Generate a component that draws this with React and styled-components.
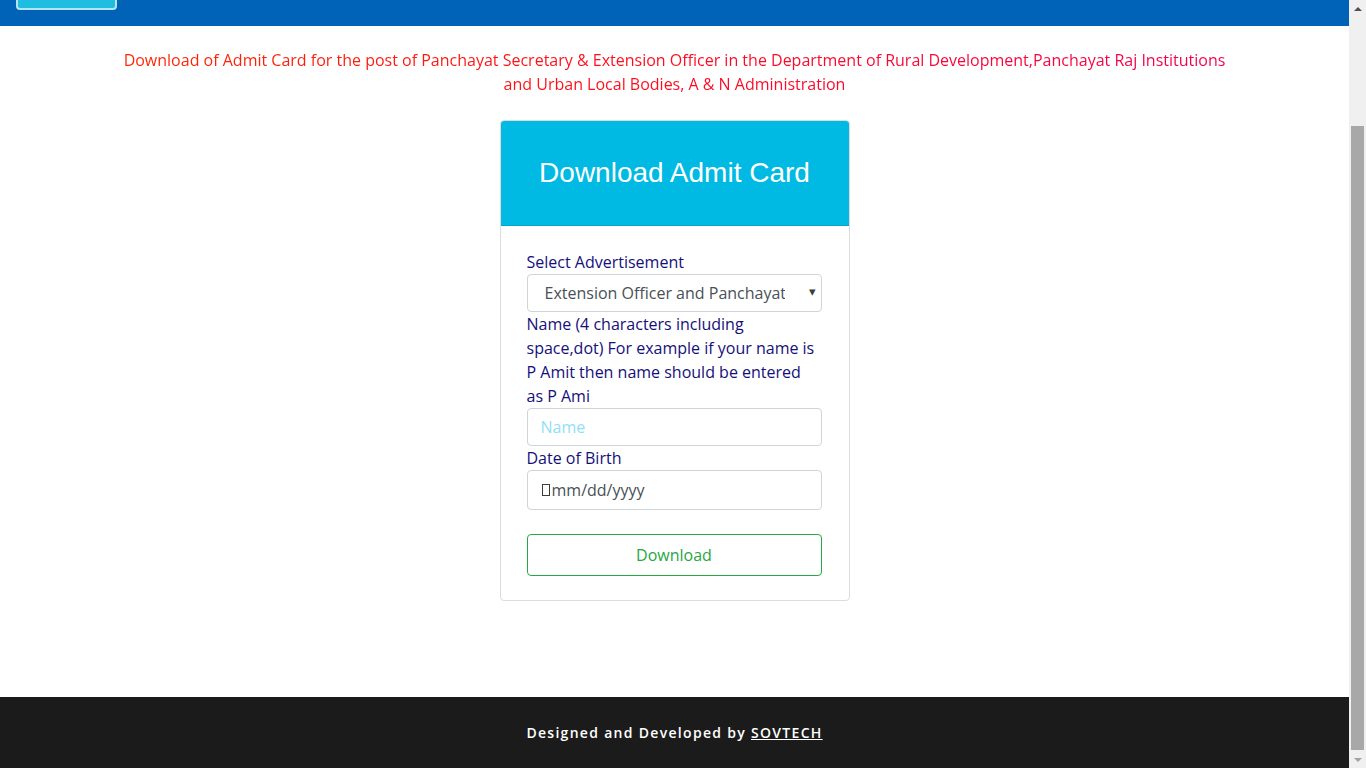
import { useLayoutEffect } from 'react';
import styled, { createGlobalStyle } from 'styled-components';

const GlobalStyle = createGlobalStyle`
  * {
    box-sizing: border-box;
  }
  html,
  body {
    margin: 0;
    padding: 0;
  }
  html {
    scrollbar-width: none;
  }
  html::-webkit-scrollbar {
    display: none;
  }
  body {
    font-family: 'Open Sans', 'Noto Sans', sans-serif;
    font-size: 16px;
    line-height: 1.5;
    color: #212529;
    background: #fff;
  }
`;

const Page = styled.div`
  margin-right: 17px;
`;

/* window scrollbar as drawn by the browser in the screenshot */
const ScrollBar = styled.div`
  position: fixed;
  top: 0;
  right: 0;
  bottom: 0;
  width: 17px;
  background: #f0f0f0;
  display: flex;
  flex-direction: column;
  z-index: 10;
`;

const ScrollArrow = styled.div`
  height: 17px;
  display: flex;
  align-items: center;
  justify-content: center;
  &::before {
    content: '';
    border-left: 4px solid transparent;
    border-right: 4px solid transparent;
    ${(p) =>
      p.$down
        ? 'border-top: 4px solid #a3a3a3;'
        : 'border-bottom: 4px solid #505050;'}
  }
`;

const ScrollTrack = styled.div`
  flex: 1;
  display: flex;
  flex-direction: column;
  justify-content: flex-end;
  padding: 0 2px 1px;
`;

const ScrollThumb = styled.div`
  height: 624px;
  background: #a8a8a8;
`;

const Navbar = styled.header`
  height: 159px;
  background: #0063b7;
  display: flex;
  align-items: flex-end;
  padding: 16px;
`;

const NavButton = styled.button`
  width: 101px;
  height: 40px;
  background: #1fbde0;
  border: 2px solid #b3e6f4;
  border-radius: 4px;
`;

const Main = styled.main`
  max-width: 1140px;
  margin: 0 auto;
  padding: 22px 15px 96px;
`;

const Notice = styled.p`
  margin: 0 0 24px;
  text-align: center;
  font-size: 16px;
  line-height: 24px;
  background: linear-gradient(90deg, #ff2600 0%, #ff0a1e 50%, #f5004f 100%);
  -webkit-background-clip: text;
  background-clip: text;
  color: transparent;
`;

const Card = styled.section`
  width: 350px;
  margin: 0 auto;
  border: 1px solid #dcdcdc;
  border-radius: 4px;
  overflow: hidden;
`;

const CardHeader = styled.div`
  height: 105px;
  background: #00bae3;
  border-bottom: 1px solid #00a9d2;
  display: flex;
  align-items: center;
  justify-content: center;
  h2 {
    margin: 0;
    color: #fff;
    font-family: 'Liberation Sans', Arial, sans-serif;
    font-size: 28px;
    font-weight: 400;
  }
`;

const CardBody = styled.form`
  padding: 24px 27px 24px 26px;
  display: flex;
  flex-direction: column;
`;

const Label = styled.label`
  color: #15107a;
  font-size: 16px;
  line-height: 24px;
  padding-right: 4px;
`;

const fieldBase = `
  width: 100%;
  border: 1px solid #ced4da;
  border-radius: 4px;
  background: #fff;
  font-family: 'Open Sans', sans-serif;
  font-size: 16px;
  color: #495057;
`;

const SelectWrap = styled.div`
  position: relative;
  &::after {
    content: '▾';
    position: absolute;
    right: 6px;
    top: 8px;
    font-size: 13px;
    color: #3c3c3c;
    pointer-events: none;
  }
`;

const Select = styled.select`
  ${fieldBase}
  height: 38px;
  padding: 0 36px 0 17px;
  appearance: none;
  -webkit-appearance: none;
  outline: none;
`;

const Input = styled.input`
  ${fieldBase}
  height: 38px;
  padding: 0 13px;
  outline: none;
  &::placeholder {
    color: #8fe1f6;
  }
`;

const DateField = styled.div`
  ${fieldBase}
  height: 40px;
  padding: 0 14px;
  display: flex;
  align-items: center;
  .tofu {
    width: 8px;
    height: 12px;
    border: 1px solid #3b3b3b;
    margin-right: 2px;
  }
`;

const DownloadButton = styled.button`
  margin-top: 24px;
  height: 42px;
  border: 1px solid #28a745;
  border-radius: 4px;
  background: #fff;
  color: #28a745;
  font-family: 'Open Sans', sans-serif;
  font-size: 16px;
`;

const Footer = styled.footer`
  height: 71px;
  background: #1b1b1b;
  display: flex;
  align-items: center;
  justify-content: center;
  color: #fff;
  font-size: 14px;
  font-weight: 600;
  letter-spacing: 1.3px;
  a {
    color: #fff;
    text-decoration: underline;
  }
`;

export default function App() {
  useLayoutEffect(() => {
    window.scrollTo(0, document.documentElement.scrollHeight);
  }, []);

  return (
    <>
      <GlobalStyle />
      <Page>
        <Navbar>
          <NavButton type="button" aria-label="Home" />
        </Navbar>
        <Main>
          <Notice>
            Download of Admit Card for the post of Panchayat Secretary &amp; Extension Officer in the
            Department of Rural Development,Panchayat Raj Institutions and Urban Local Bodies, A &amp;
            N Administration
          </Notice>
          <Card>
            <CardHeader>
              <h2>Download Admit Card</h2>
            </CardHeader>
            <CardBody onSubmit={(e) => e.preventDefault()}>
              <Label htmlFor="adv">Select Advertisement</Label>
              <SelectWrap>
                <Select id="adv" defaultValue="1">
                  <option value="1">Extension Officer and Panchayat Secretary</option>
                </Select>
              </SelectWrap>
              <Label htmlFor="name">
                Name (4 characters including space,dot) For example if your name is P Amit then name
                should be entered as P Ami
              </Label>
              <Input id="name" type="text" placeholder="Name" />
              <Label>Date of Birth</Label>
              <DateField>
                <span className="tofu" />
                mm/dd/yyyy
              </DateField>
              <DownloadButton type="submit">Download</DownloadButton>
            </CardBody>
          </Card>
        </Main>
        <Footer>
          <span>
            Designed and Developed by <a href="#">SOVTECH</a>
          </span>
        </Footer>
      </Page>
      <ScrollBar aria-hidden="true">
        <ScrollArrow />
        <ScrollTrack>
          <ScrollThumb />
        </ScrollTrack>
        <ScrollArrow $down />
      </ScrollBar>
    </>
  );
}
